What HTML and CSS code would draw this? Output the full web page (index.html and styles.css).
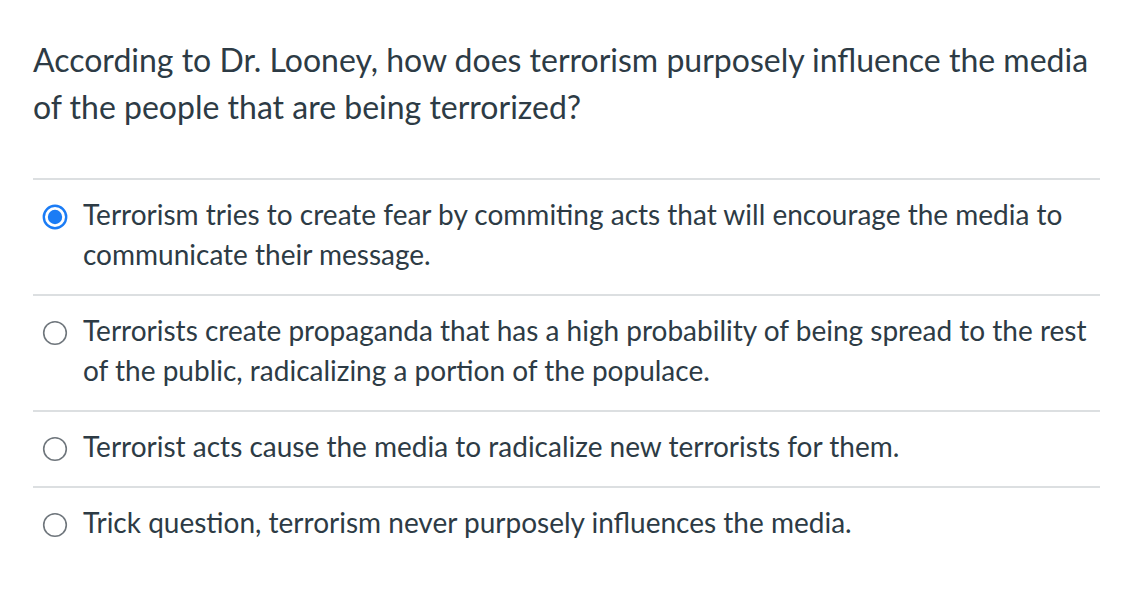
FILE: index.html
```html
<!DOCTYPE html>
<html>
<head>
<meta charset="utf-8">
<link rel="stylesheet" href="styles.css">
</head>
<body>
<div class="quiz">
  <p class="question">According to Dr. Looney, how does terrorism purposely influence the media of the people that are being terrorized?</p>
  <div class="answers">
    <div class="answer">
      <svg class="radio" width="26" height="26" viewBox="0 0 26 26"><circle cx="13" cy="13" r="11.2" fill="#fff" stroke="#1b7cf5" stroke-width="2.4"/><circle cx="13" cy="13" r="7.2" fill="#1b7cf5"/></svg>
      <div class="text">Terrorism tries to create fear by commiting acts that will encourage the media to communicate their message.</div>
    </div>
    <div class="answer">
      <svg class="radio" width="26" height="26" viewBox="0 0 26 26"><circle cx="13" cy="13" r="11.3" fill="#fff" stroke="#6f767c" stroke-width="1.6"/></svg>
      <div class="text">Terrorists create propaganda that has a high probability of being spread to the rest of the public, radicalizing a portion of the populace.</div>
    </div>
    <div class="answer">
      <svg class="radio" width="26" height="26" viewBox="0 0 26 26"><circle cx="13" cy="13" r="11.3" fill="#fff" stroke="#6f767c" stroke-width="1.6"/></svg>
      <div class="text">Terrorist acts cause the media to radicalize new terrorists for them.</div>
    </div>
    <div class="answer last">
      <svg class="radio" width="26" height="26" viewBox="0 0 26 26"><circle cx="13" cy="13" r="11.3" fill="#fff" stroke="#6f767c" stroke-width="1.6"/></svg>
      <div class="text">Trick question, terrorism never purposely influences the media.</div>
    </div>
  </div>
</div>
</body>
</html>
```
FILE: styles.css
```css
html, body {
  margin: 0;
  padding: 0;
  background: #ffffff;
}
body {
  font-family: Lato, "Noto Sans", sans-serif;
  color: #2d3b45;
}
.quiz {
  width: 1067px;
  margin-left: 33px;
  padding-top: 36px;
}
.question {
  margin: 0;
  font-size: 32px;
  line-height: 47px;
}
.answers {
  margin-top: 48px;
}
.answer {
  display: flex;
  align-items: flex-start;
  border-top: 2px solid #dcdfe1;
  padding: 14px 0 20px 9px;
}
.answer.last {
  padding-bottom: 0;
}
.radio {
  flex: none;
  margin-top: 10px;
  margin-right: 15px;
}
.text {
  font-size: 28px;
  line-height: 40px;
}
```
